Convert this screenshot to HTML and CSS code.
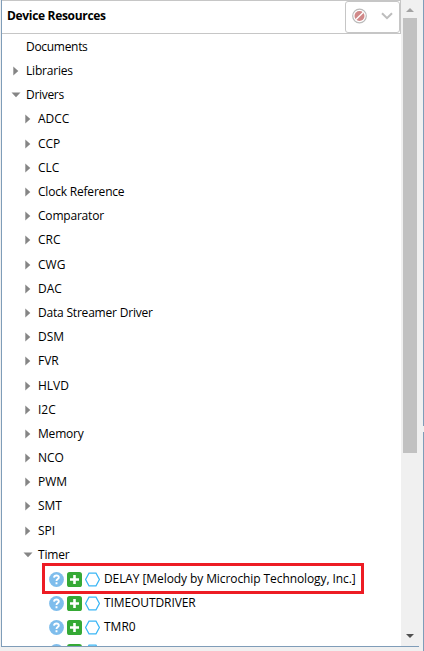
FILE: index.html
```
<!DOCTYPE html>
<html lang="en">
<head>
<meta charset="utf-8">
<title>Device Resources</title>
<link rel="stylesheet" href="styles.css">
</head>
<body>
<svg width="0" height="0" class="defs">
  <symbol id="right" viewBox="0 0 6 10"><path d="M0.3 0.5L5.3 5L0.3 9.5Z" fill="#858585"/></symbol>
  <symbol id="down" viewBox="0 0 10 6"><path d="M0.5 0.5H9.5L5 5.2Z" fill="#858585"/></symbol>
  <symbol id="help" viewBox="0 0 15 15"><circle cx="7.5" cy="7.5" r="7.4" fill="#7ebdec"/><path d="M5 5.6C5.2 2.9 10 2.9 9.8 5.5C9.8 7.2 7.5 7 7.5 9M7.5 10.2V12.2" fill="none" stroke="#fff" stroke-width="1.9"/></symbol>
  <symbol id="plus" viewBox="0 0 15 15"><rect width="15" height="15" rx="2.6" fill="#35a935"/><path d="M7.5 3V12M3 7.5H12" stroke="#fff" stroke-width="2.6"/></symbol>
  <symbol id="hex" viewBox="0 0 15 15"><path d="M4 1.2H11L14.4 7.5L11 13.8H4L0.6 7.5Z" fill="#fff" stroke="#3bb6f5" stroke-width="1.2"/></symbol>
</svg>
<div class="window">
  <section class="panel">
    <main class="content">
      <header class="header">
        <h1>Device Resources</h1>
        <div class="tools">
          <svg width="15" height="16" viewBox="0 0 15 16"><circle cx="7.5" cy="8" r="6.8" fill="#fff" stroke="#bbb" stroke-width="1.2"/><circle cx="7.5" cy="8" r="5" fill="#d08888"/><path d="M3.7 11.8L11.3 4.2" stroke="#fff" stroke-width="1.3"/></svg>
          <svg width="12" height="8" viewBox="0 0 12 8"><path d="M1 1.2L6 6.2L11 1.2" fill="none" stroke="#bdbdbd" stroke-width="2"/></svg>
        </div>
      </header>
      <ul class="tree">
        <li><i></i><span class="title">Documents</span></li>
        <li><i><svg class="r"><use href="#right"/></svg></i><span class="name">Libraries</span></li>
        <li><i><svg class="d"><use href="#down"/></svg></i><span class="title">Drivers</span></li>
        <li class="sub"><i><svg class="r"><use href="#right"/></svg></i><span>ADCC</span></li>
        <li class="sub"><i><svg class="r"><use href="#right"/></svg></i><span>CCP</span></li>
        <li class="sub"><i><svg class="r"><use href="#right"/></svg></i><span>CLC</span></li>
        <li class="sub"><i><svg class="r"><use href="#right"/></svg></i><span class="name">Clock Reference</span></li>
        <li class="sub"><i><svg class="r"><use href="#right"/></svg></i><span class="name">Comparator</span></li>
        <li class="sub"><i><svg class="r"><use href="#right"/></svg></i><span>CRC</span></li>
        <li class="sub"><i><svg class="r"><use href="#right"/></svg></i><span>CWG</span></li>
        <li class="sub"><i><svg class="r"><use href="#right"/></svg></i><span>DAC</span></li>
        <li class="sub"><i><svg class="r"><use href="#right"/></svg></i><span class="name">Data Streamer Driver</span></li>
        <li class="sub"><i><svg class="r"><use href="#right"/></svg></i><span>DSM</span></li>
        <li class="sub"><i><svg class="r"><use href="#right"/></svg></i><span>FVR</span></li>
        <li class="sub"><i><svg class="r"><use href="#right"/></svg></i><span>HLVD</span></li>
        <li class="sub"><i><svg class="r"><use href="#right"/></svg></i><span>I2C</span></li>
        <li class="sub"><i><svg class="r"><use href="#right"/></svg></i><span class="name">Memory</span></li>
        <li class="sub"><i><svg class="r"><use href="#right"/></svg></i><span>NCO</span></li>
        <li class="sub"><i><svg class="r"><use href="#right"/></svg></i><span>PWM</span></li>
        <li class="sub"><i><svg class="r"><use href="#right"/></svg></i><span>SMT</span></li>
        <li class="sub"><i><svg class="r"><use href="#right"/></svg></i><span>SPI</span></li>
        <li class="sub"><i><svg class="d"><use href="#down"/></svg></i><span class="name">Timer</span></li>
        <li class="leaf marked"><svg><use href="#help"/></svg><svg><use href="#plus"/></svg><svg><use href="#hex"/></svg><span class="long">DELAY [Melody by Microchip Technology, Inc.]</span></li>
        <li class="leaf"><svg><use href="#help"/></svg><svg><use href="#plus"/></svg><svg><use href="#hex"/></svg><span class="long">TIMEOUTDRIVER</span></li>
        <li class="leaf"><svg><use href="#help"/></svg><svg><use href="#plus"/></svg><svg><use href="#hex"/></svg><span>TMR0</span></li>
        <li class="leaf"><svg><use href="#help"/></svg><svg><use href="#plus"/></svg><svg><use href="#hex"/></svg></li>
      </ul>
    </main>
    <aside class="scrollbar">
      <svg width="8" height="4" viewBox="0 0 8 4"><path d="M0 4L4 0L8 4Z" fill="#a3a3a3"/></svg>
      <div class="thumb"></div>
      <svg class="end" width="8" height="4" viewBox="0 0 8 4"><path d="M0 0H8L4 4Z" fill="#505050"/></svg>
    </aside>
  </section>
  <div class="edge"><b class="upper"></b><b class="lower"></b></div>
</div>
</body>
</html>
```
FILE: styles.css
```
*, *::before { box-sizing: border-box; }
body {
  margin: 0;
  background: #f0f0f0;
  color: #000;
  font: 12px/24px "Open Sans", "Noto Sans", sans-serif;
}
.defs { position: absolute; }
.window { display: flex; height: 651px; overflow: hidden; }
.panel {
  display: flex;
  width: 418px;
  height: 647px;
  margin-left: 1px;
  border-left: 1px solid #7f9db9;
  border-bottom: 1px solid #7f9db9;
}
.content { width: 399px; background: #fff; overflow: hidden; }
.header {
  display: flex;
  justify-content: space-between;
  height: 34px;
  border: 1px solid #c6c6c6;
  border-width: 1px 1px 1px 0;
}
h1 {
  margin: 0 0 0 5px;
  font-size: 12px;
  line-height: 30px;
  font-weight: 700;
  letter-spacing: -0.32px;
  white-space: nowrap;
}
.tools {
  display: flex;
  align-items: center;
  gap: 14px;
  width: 55px;
  height: 32px;
  padding: 0 0 2px 6px;
  border: 1px solid #c6c6c6;
  border-radius: 3px;
}
.tree { margin: 0.8px 0 0; padding: 0; list-style: none; }
li {
  position: relative;
  display: flex;
  align-items: center;
  height: 24.19px;
  padding-left: 9px;
  white-space: nowrap;
}
.sub { padding-left: 21px; }
i { display: flex; flex: none; justify-content: center; width: 9px; margin-right: 6px; }
.r { width: 6px; height: 10px; }
.d { width: 10px; height: 6px; flex: none; }
.leaf { padding-left: 47px; gap: 3px; }
.leaf svg { width: 15px; height: 15px; flex: none; }
.leaf span { margin-left: 1px; }
.name { letter-spacing: -0.2px; }
.title { letter-spacing: -0.3px; }
.long { letter-spacing: -0.09px; }
.marked::before {
  content: "";
  position: absolute;
  left: 40px;
  top: -4px;
  width: 322px;
  height: 31px;
  border: 3px solid #ed1c24;
}
.scrollbar {
  display: flex;
  flex-direction: column;
  align-items: center;
  width: 18px;
  padding-top: 8px;
}
.thumb { width: 14px; height: 435px; margin-top: 6px; background: #c1c1c1; }
.end { margin: auto 0 8px; }
.edge { display: flex; flex-direction: column; gap: 6px; width: 1px; margin-left: auto; }
.edge b { background: #7f9db9; }
.upper { height: 426px; }
.lower { flex: 1; }
```
